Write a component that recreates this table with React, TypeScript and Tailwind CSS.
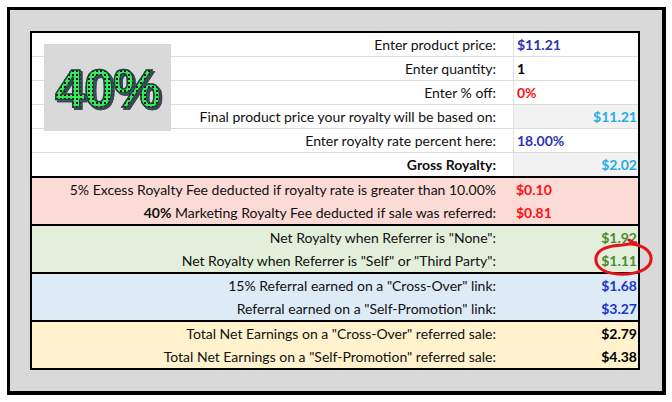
import React from "react";

interface Row {
  label: React.ReactNode;
  value: string;
  valueClass: string;
  align: "left" | "right";
  shaded?: boolean;
}

const topRows: Row[] = [
  { label: "Enter product price:", value: "$11.21", valueClass: "text-[#2b33b8]", align: "left" },
  { label: "Enter quantity:", value: "1", valueClass: "text-black", align: "left" },
  { label: "Enter % off:", value: "0%", valueClass: "text-[#ff1010]", align: "left" },
  {
    label: "Final product price your royalty will be based on:",
    value: "$11.21",
    valueClass: "text-[#1eaee6]",
    align: "right",
    shaded: true,
  },
  { label: "Enter royalty rate percent here:", value: "18.00%", valueClass: "text-[#2b33b8]", align: "left" },
  {
    label: <span className="font-bold">Gross Royalty:</span>,
    value: "$2.02",
    valueClass: "text-[#1eaee6]",
    align: "right",
    shaded: true,
  },
];

interface Group {
  bg: string;
  rows: Row[];
}

const groups: Group[] = [
  {
    bg: "bg-[#fcdad5]",
    rows: [
      {
        label: "5% Excess Royalty Fee deducted if royalty rate is greater than 10.00%",
        value: "$0.10",
        valueClass: "text-[#ff1010]",
        align: "left",
      },
      {
        label: (
          <>
            <span className="font-bold">40%</span> Marketing Royalty Fee deducted if sale was referred:
          </>
        ),
        value: "$0.81",
        valueClass: "text-[#ff1010]",
        align: "left",
      },
    ],
  },
  {
    bg: "bg-[#e2efda]",
    rows: [
      { label: 'Net Royalty when Referrer is "None":', value: "$1.92", valueClass: "text-[#4b8a2e]", align: "right" },
      {
        label: 'Net Royalty when Referrer is "Self" or "Third Party":',
        value: "$1.11",
        valueClass: "text-[#4b8a2e]",
        align: "right",
      },
    ],
  },
  {
    bg: "bg-[#ddebf7]",
    rows: [
      { label: '15% Referral earned on a "Cross-Over" link:', value: "$1.68", valueClass: "text-[#1c36cf]", align: "right" },
      { label: 'Referral earned on a "Self-Promotion" link:', value: "$3.27", valueClass: "text-[#1c36cf]", align: "right" },
    ],
  },
  {
    bg: "bg-[#fff2cc]",
    rows: [
      { label: 'Total Net Earnings on a "Cross-Over" referred sale:', value: "$2.79", valueClass: "text-black", align: "right" },
      {
        label: 'Total Net Earnings on a "Self-Promotion" referred sale:',
        value: "$4.38",
        valueClass: "text-black",
        align: "right",
      },
    ],
  },
];

function Cells({ row }: { row: Row }) {
  return (
    <>
      <div className="w-[481px] pr-[17px] text-right whitespace-nowrap">{row.label}</div>
      <div
        className={`w-[125px] h-full flex items-center font-bold ${row.valueClass} ${
          row.align === "right" ? "justify-end pr-[1px]" : "justify-start pl-[3px]"
        }`}
      >
        {row.value}
      </div>
    </>
  );
}

export default function App() {
  return (
    <div className="w-[672px] h-[402px] bg-white pt-[7px] pl-[7px] relative font-['Lato',sans-serif] text-[14px] text-[#111]">
      <div className="w-[659px] h-[388px] border-[3px] border-r-4 border-b-4 border-black bg-[#d9d9d9] pt-[21px] pl-[20px]">
        <div className="w-[610px] border-2 border-black bg-white relative">
          {/* input / calculated rows */}
          <div>
            {topRows.map((row, i) => (
              <div
                key={i}
                className={`flex items-center ${i < topRows.length - 1 ? "h-[24px] border-b border-[#dcdcdc]" : "h-[23px]"}`}
              >
                <div className="w-[481px] h-full flex items-center justify-end pr-[17px] whitespace-nowrap">
                  {row.label}
                </div>
                <div
                  className={`w-[125px] h-full flex items-center font-bold border-l border-[#e2e2e2] ${row.valueClass} ${
                    row.shaded ? "bg-[#f2f2f2]" : ""
                  } ${row.align === "right" ? "justify-end pr-[1px]" : "justify-start pl-[3px]"}`}
                >
                  {row.value}
                </div>
              </div>
            ))}
          </div>

          {/* coloured result groups */}
          {groups.map((g, gi) => (
            <div key={gi} className={`border-t-2 border-black ${g.bg}`}>
              {g.rows.map((row, ri) => (
                <div key={ri} className="flex items-center h-[23px]">
                  <Cells row={row} />
                </div>
              ))}
            </div>
          ))}

          {/* 40% picture */}
          <div className="absolute left-[12px] top-[11px] w-[127px] h-[87px] bg-[#d9d9d9] flex items-center justify-center">
            <span className="font-['Liberation_Sans',sans-serif] text-[54px] font-bold leading-none tracking-[-1px] text-transparent bg-clip-text bg-[radial-gradient(circle,#0d1a10_0.8px,#32ec58_1.3px)] bg-[length:4px_4px] [-webkit-text-stroke:1.5px_#2e3846] drop-shadow-[2px_2px_0_#3a4556]">
              40%
            </span>
          </div>
        </div>
      </div>

      {/* red hand-drawn circle */}
      <svg className="absolute left-0 top-0 pointer-events-none" width="672" height="402" viewBox="0 0 672 402">
        <path
          d="M632 244 C645 246 652 252 651 260 C650 270 635 275 618 274 C602 273 595 266 596 258 C597 250 606 246 622 245 L636 243 M629 240 L636 244"
          fill="none"
          stroke="#e3121c"
          strokeWidth="3"
          strokeLinecap="round"
        />
      </svg>
    </div>
  );
}
